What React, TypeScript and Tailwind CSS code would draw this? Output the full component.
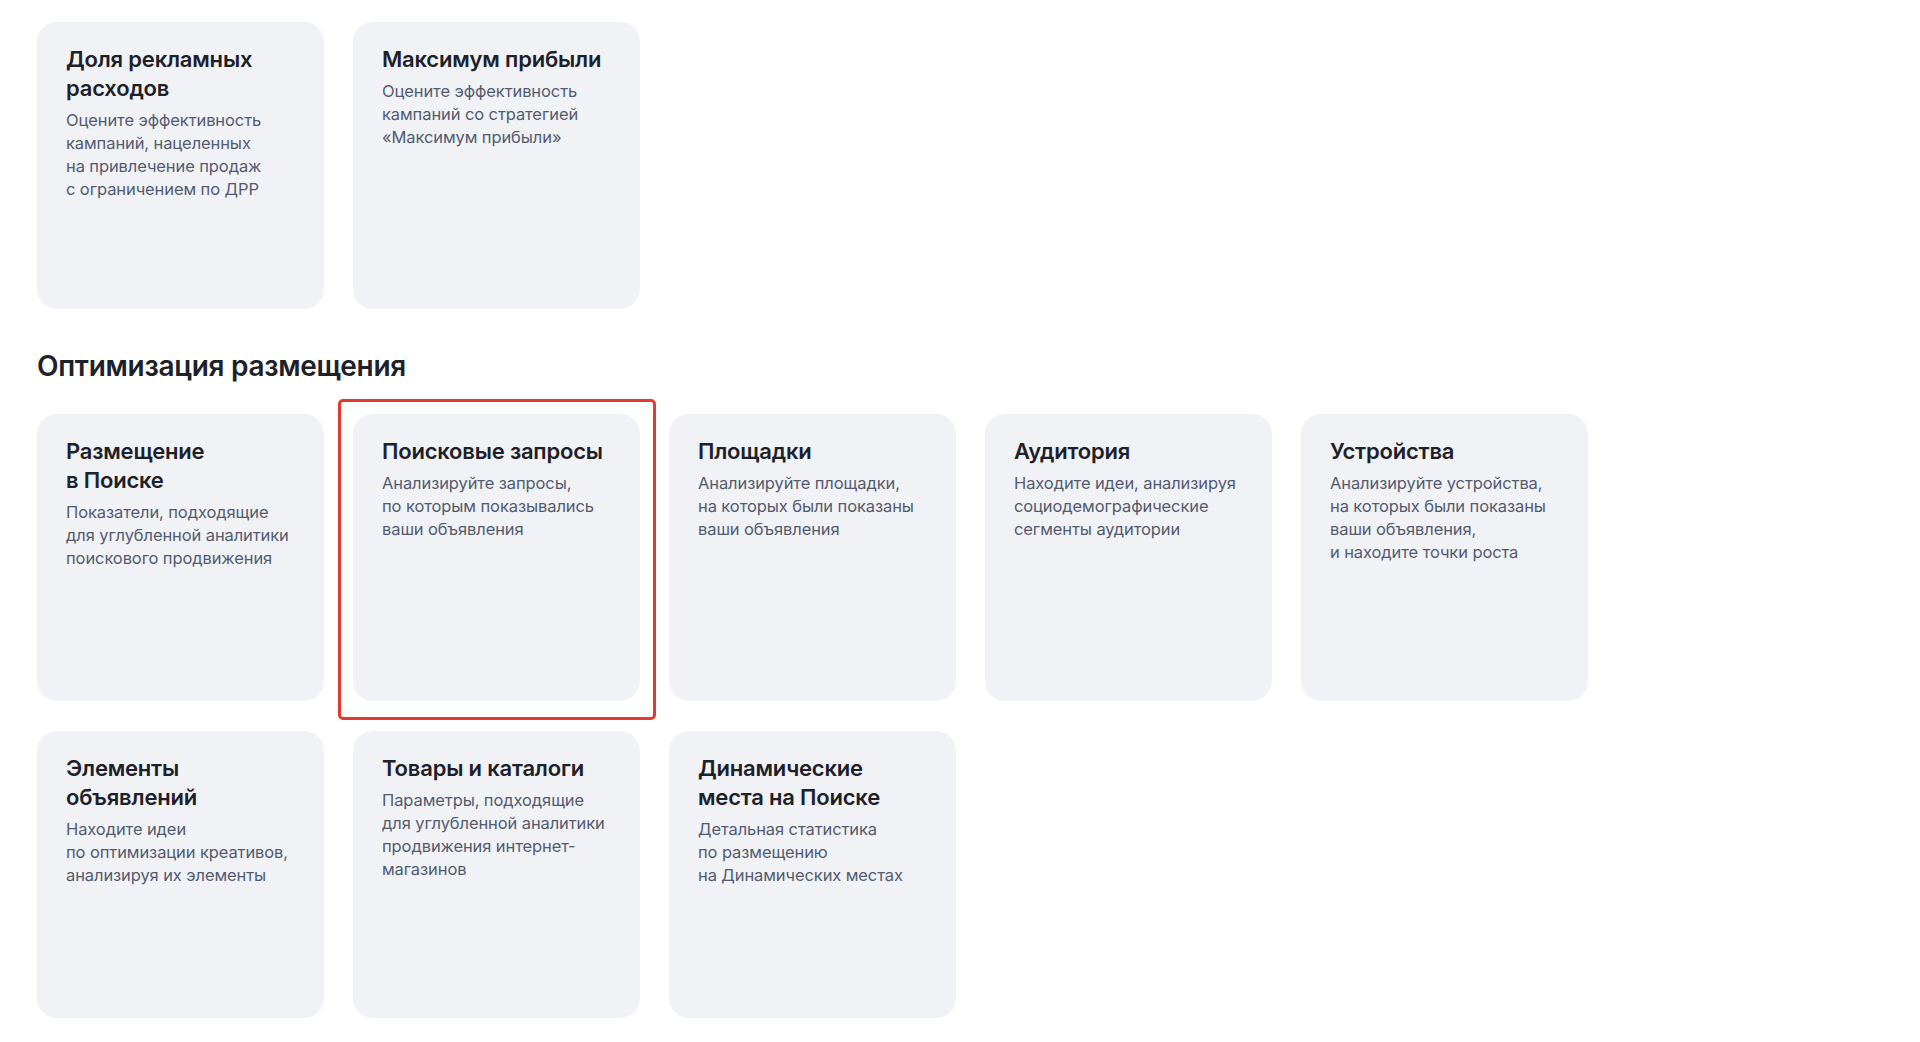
import React from 'react';

interface Tile {
  title: string[];
  text: string[];
  marked?: boolean;
}

const goals: Tile[] = [
  {
    title: ['Доля рекламных', 'расходов'],
    text: [
      'Оцените эффективность',
      'кампаний, нацеленных',
      'на привлечение продаж',
      'с ограничением по ДРР',
    ],
  },
  {
    title: ['Максимум прибыли'],
    text: ['Оцените эффективность', 'кампаний со стратегией', '«Максимум прибыли»'],
  },
];

const placement: Tile[] = [
  {
    title: ['Размещение', 'в Поиске'],
    text: ['Показатели, подходящие', 'для углубленной аналитики', 'поискового продвижения'],
  },
  {
    title: ['Поисковые запросы'],
    text: ['Анализируйте запросы,', 'по которым показывались', 'ваши объявления'],
    marked: true,
  },
  {
    title: ['Площадки'],
    text: ['Анализируйте площадки,', 'на которых были показаны', 'ваши объявления'],
  },
  {
    title: ['Аудитория'],
    text: ['Находите идеи, анализируя', 'социодемографические', 'сегменты аудитории'],
  },
  {
    title: ['Устройства'],
    text: [
      'Анализируйте устройства,',
      'на которых были показаны',
      'ваши объявления,',
      'и находите точки роста',
    ],
  },
  {
    title: ['Элементы', 'объявлений'],
    text: ['Находите идеи', 'по оптимизации креативов,', 'анализируя их элементы'],
  },
  {
    title: ['Товары и каталоги'],
    text: ['Параметры, подходящие', 'для углубленной аналитики', 'продвижения интернет-', 'магазинов'],
  },
  {
    title: ['Динамические', 'места на Поиске'],
    text: ['Детальная статистика', 'по размещению', 'на Динамических местах'],
  },
];

function Card({ tile }: { tile: Tile }) {
  return (
    <div className="relative">
      {tile.marked && (
        <span className="pointer-events-none absolute -left-[15px] -top-[15px] -right-[16px] -bottom-[19px] rounded-[5px] border-[3px] border-[#e5392f]" />
      )}
      <div className="h-[287px] w-[287px] rounded-[20px] bg-[#f1f2f6] px-[29px] pt-[23px] cursor-pointer">
        <h3 className="text-[22px] leading-[29px] font-semibold text-[#1d2129] tracking-[-0.2px]">
          {tile.title.map((l) => (
            <div key={l}>{l}</div>
          ))}
        </h3>
        <p className="mt-[6px] text-[16.5px] leading-[23px] text-[#535b6e] tracking-[-0.1px]">
          {tile.text.map((l) => (
            <span key={l} className="block">
              {l}
            </span>
          ))}
        </p>
      </div>
    </div>
  );
}

export default function App() {
  return (
    <div
      className="min-h-screen bg-white pl-[37px] pt-[22px]"
      style={{ fontFamily: 'Inter, "Noto Sans", sans-serif' }}
    >
      <div className="grid grid-cols-[repeat(5,287px)] gap-x-[29px] gap-y-[30px]">
        {goals.map((t) => (
          <Card key={t.title.join(' ')} tile={t} />
        ))}
      </div>

      <h2 className="mt-[39px] mb-[30px] text-[28px] leading-[36px] font-semibold text-[#1d2129] tracking-[-0.3px]">
        Оптимизация размещения
      </h2>

      <div className="grid grid-cols-[repeat(5,287px)] gap-x-[29px] gap-y-[30px]">
        {placement.map((t) => (
          <Card key={t.title.join(' ')} tile={t} />
        ))}
      </div>
    </div>
  );
}
